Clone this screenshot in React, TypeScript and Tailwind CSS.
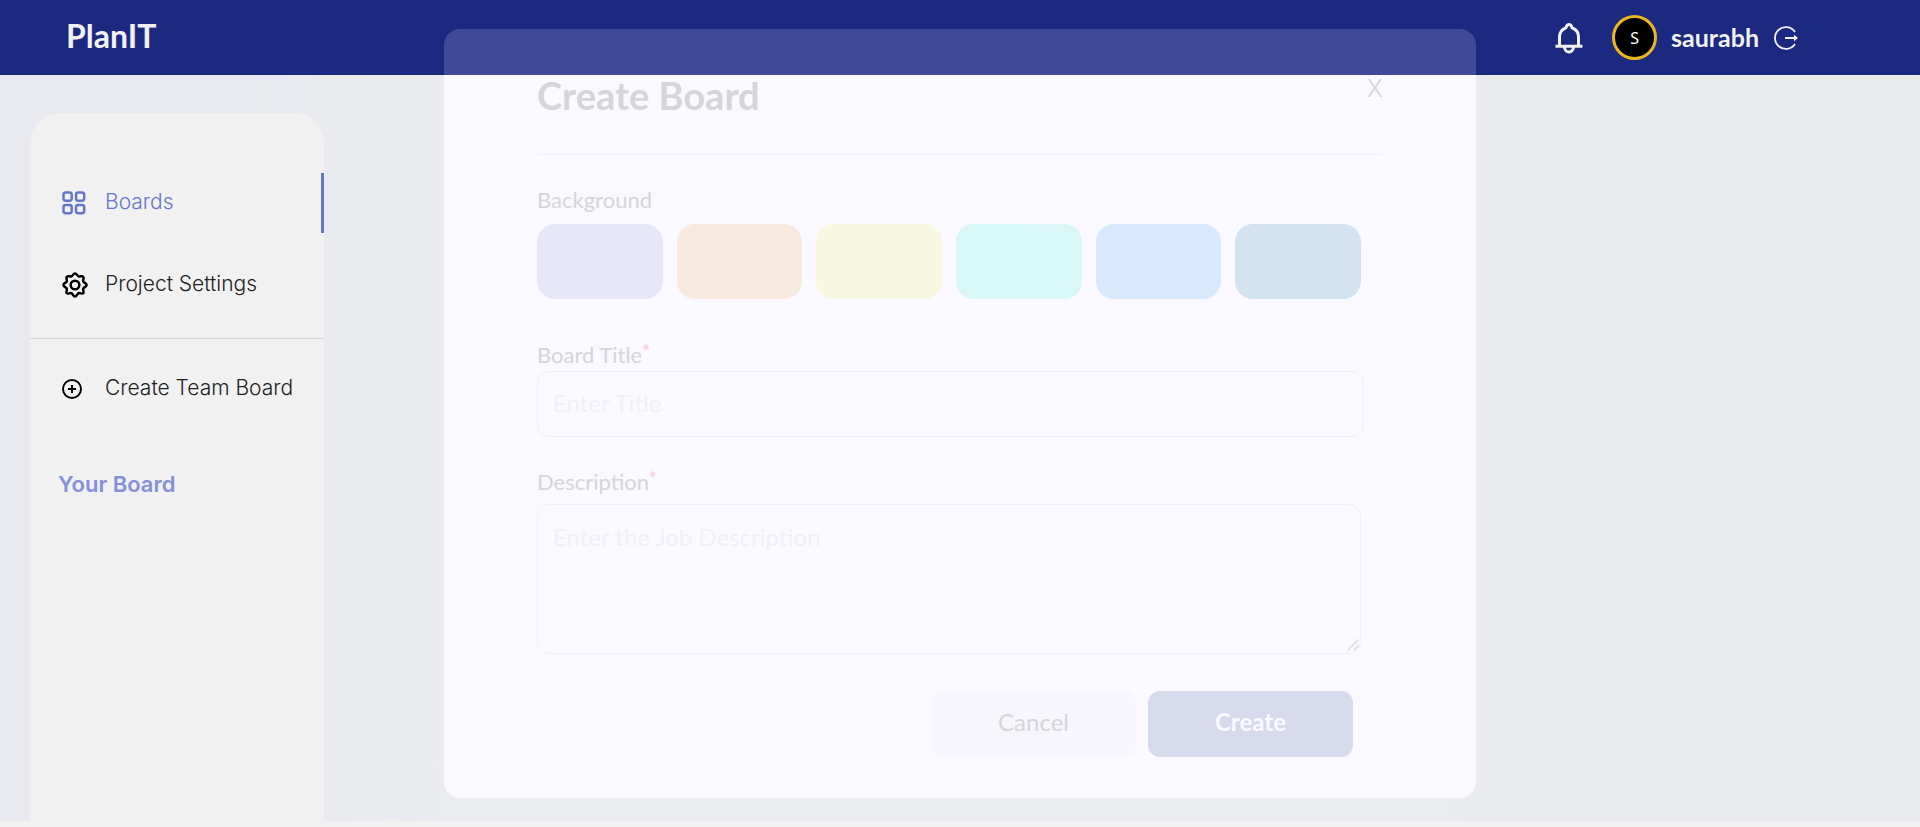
import React from "react";

const swatches = [
  { name: "Lavender", cls: "bg-[#e6e8fa]" },
  { name: "Peach", cls: "bg-[#f8eadf]" },
  { name: "Lemon", cls: "bg-[#f8f7df]" },
  { name: "Mint", cls: "bg-[#d8f7f6]" },
  { name: "Sky", cls: "bg-[#d9eaff]" },
  { name: "Steel", cls: "bg-[#d3e3f1]" },
];

function BellIcon() {
  return (
    <svg className="size-8" viewBox="0 0 32 32" fill="none" stroke="currentColor" strokeWidth="3" strokeLinejoin="round" aria-hidden="true">
      <path d="M2.500 24.300h27M6.500 24V14.500a9.500 9.500 0 0 1 5.800-8.300C13.500 5.700 13.300 2.500 16 2.500s2.500 3.200 3.700 3.700a9.500 9.500 0 0 1 5.800 8.300V24" />
      <path d="M11.500 25a4.500 5 0 0 0 9 0" />
    </svg>
  );
}

function LogoutIcon() {
  return (
    <svg className="size-6" viewBox="0 0 24 24" fill="none" stroke="currentColor" strokeWidth="1.800" aria-hidden="true">
      <path d="M21 6A10.900 10.900 0 1 0 21 18" />
      <path d="M11 12h11" strokeWidth="2" />
      <path d="M20 8.800 24 12l-4 3.200z" fill="currentColor" stroke="none" />
    </svg>
  );
}

function BoardsIcon() {
  return (
    <svg className="size-6" viewBox="0 0 24 24" fill="none" stroke="currentColor" strokeWidth="2.500" aria-hidden="true">
      <rect x="1.500" y="1.500" width="8.200" height="8.200" rx="2.200" />
      <rect x="14" y="1.500" width="8.200" height="8.200" rx="2.200" />
      <rect x="1.500" y="14" width="8.200" height="8.200" rx="2.200" />
      <rect x="14" y="14" width="8.200" height="8.200" rx="2.200" />
    </svg>
  );
}

function GearIcon() {
  return (
    <svg className="size-[26px]" viewBox="0 0 24 24" fill="none" stroke="currentColor" strokeWidth="2.300" strokeLinejoin="round" aria-hidden="true">
      <path d="M12 1.300c1.700 0 1.900 2.200 3.300 2.700S18.500 3.300 19.600 4.400 19 7.300 19.600 8.700s3.100 1.600 3.100 3.300-2.500 1.900-3.100 3.300 1.100 3.200 0 4.300-2.900-.6-4.300 0-1.600 3.100-3.300 3.100-1.900-2.500-3.300-3.100-3.200 1.100-4.300 0 .6-2.900 0-4.300S1.300 13.700 1.300 12s2.500-1.900 3.100-3.300-1.100-3.200 0-4.300 2.900.1 4.300-.4S10.300 1.300 12 1.300z" />
      <circle cx="12" cy="12" r="4" />
    </svg>
  );
}

function PlusIcon() {
  return (
    <svg className="size-5" viewBox="0 0 20 20" fill="none" stroke="currentColor" strokeWidth="1.900" aria-hidden="true">
      <circle cx="10" cy="10" r="9" />
      <path d="M10 6v8M6 10h8" strokeWidth="2" />
    </svg>
  );
}

function Header() {
  return (
    <header className="flex h-[75px] items-center justify-between bg-[#1b2a80] pl-[66px] pr-[122px] font-['Lato',sans-serif] text-[#f1f1f1]">
      <a href="#home" className="pb-1 text-[32px] font-bold">PlanIT</a>
      <div className="flex items-center">
        <button type="button" aria-label="Notifications" className="mr-[27px]"><BellIcon /></button>
        <span className="mr-[14px] flex size-[45px] items-center justify-center rounded-full border-3 border-[#ecb71b] bg-black font-['Noto_Sans',sans-serif] text-base text-white">S</span>
        <span className="mr-[15px] text-[25px] font-bold">saurabh</span>
        <button type="button" aria-label="Log out"><LogoutIcon /></button>
      </div>
    </header>
  );
}

function NavItem({ icon, label, active }: { icon: React.ReactNode; label: string; active?: boolean }) {
  return (
    <a
      href="#nav"
      className={
        active
          ? "flex h-[60px] items-center border-r-3 border-[#6777c8] pl-8 text-[#6777c8]"
          : "flex h-[60px] items-center pl-8 text-[#222222]"
      }
    >
      <span className={active ? "flex w-[43px]" : "flex w-[43px] text-black"}>{icon}</span>
      <span className="pb-0.5">{label}</span>
    </a>
  );
}

function Sidebar() {
  return (
    <aside className="w-[294px] shrink-0 rounded-t-[30px] bg-[#f1f1f1] pt-[60px] font-['Inter',sans-serif] text-[21px] font-light">
      <nav>
        <div className="flex flex-col gap-[22px] border-b border-[#d6d6d8] pb-[23px]">
          <NavItem icon={<BoardsIcon />} label="Boards" active />
          <NavItem icon={<GearIcon />} label="Project Settings" />
        </div>
        <div className="pt-5">
          <NavItem icon={<PlusIcon />} label="Create Team Board" />
        </div>
      </nav>
      <h2 className="pl-7 pt-[49px] text-[22px] font-semibold text-[#8490d9]">Your Board</h2>
    </aside>
  );
}

function RequiredMark() {
  return <span className="text-lg font-bold leading-5 text-[#fbd0d8]">*</span>;
}

function CreateBoardDialog() {
  return (
    <div className="fixed inset-0 flex items-center justify-center">
      <form
        role="dialog"
        aria-labelledby="dialog-title"
        onSubmit={(e) => e.preventDefault()}
        className="w-full max-w-[1032px] rounded-2xl bg-[linear-gradient(#3f4b98_46px,#faf9ff_46px)] px-[93px] pb-[41px] pt-[44px] font-['Lato',sans-serif] text-[#d6d5da]"
      >
        <div className="flex h-[82px] items-start justify-between border-b border-[#eff0fd]">
          <h1 id="dialog-title" className="text-[38px] font-bold leading-[44px]">Create Board</h1>
          <button type="button" aria-label="Close" className="font-['Inter',sans-serif] text-2xl font-light leading-8">X</button>
        </div>
        <fieldset className="mr-[22px] pt-[31px]">
          <legend className="float-left h-[38px] w-full text-[22px] leading-7">Background</legend>
          <div className="clear-both grid grid-cols-6 gap-[14px]">
            {swatches.map((s) => (
              <button key={s.name} type="button" aria-label={s.name} className={`h-[75px] rounded-[18px] ${s.cls}`} />
            ))}
          </div>
        </fieldset>
        <label htmlFor="title" className="mt-[42px] flex h-[30px] text-[22px] leading-7">
          Board Title<RequiredMark />
        </label>
        <div className="mr-[19px]">
          <input id="title" placeholder="Enter Title" className="block h-[66px] w-full rounded-xl border border-[#f0eff5] bg-transparent px-[15px] pb-1 text-2xl placeholder:text-[#f1f0f6]" />
        </div>
        <label htmlFor="description" className="mt-[31px] flex h-9 text-[22px] leading-7">
          Description<RequiredMark />
        </label>
        <div className="relative mr-[22px]">
          <textarea id="description" placeholder="Enter the Job Description" className="block h-[150px] w-full resize-y rounded-xl border border-[#f0eff5] bg-transparent px-[15px] py-4 text-2xl placeholder:text-[#f1f0f6] [&::-webkit-resizer]:hidden" />
          <svg className="pointer-events-none absolute bottom-[3px] right-[2px] size-3" viewBox="0 0 12 12" stroke="#dddce1" strokeWidth="1.500" aria-hidden="true">
            <path d="M0.500 11.500 11.500 0.500M6.500 11.500l5-5" />
          </svg>
        </div>
        <div className="mr-[30px] mt-[37px] flex justify-end gap-3 text-2xl">
          <button type="button" className="h-[66px] w-[205px] rounded-xl bg-[#f6f6fc] pb-1">Cancel</button>
          <button type="submit" className="h-[66px] w-[205px] rounded-xl bg-[#d7daec] pb-1 font-bold text-[#faf9ff]">Create</button>
        </div>
      </form>
    </div>
  );
}

export default function App() {
  return (
    <div className="flex min-h-screen flex-col bg-[#f1f1f1]">
      <Header />
      <main className="mb-[6px] flex grow bg-[linear-gradient(90deg,#e8eaf0,#ebecf0_25%,#ebecf0_75%,#e9eaee_80%)] pl-[30px] pt-[38px]">
        <Sidebar />
      </main>
      <CreateBoardDialog />
    </div>
  );
}
